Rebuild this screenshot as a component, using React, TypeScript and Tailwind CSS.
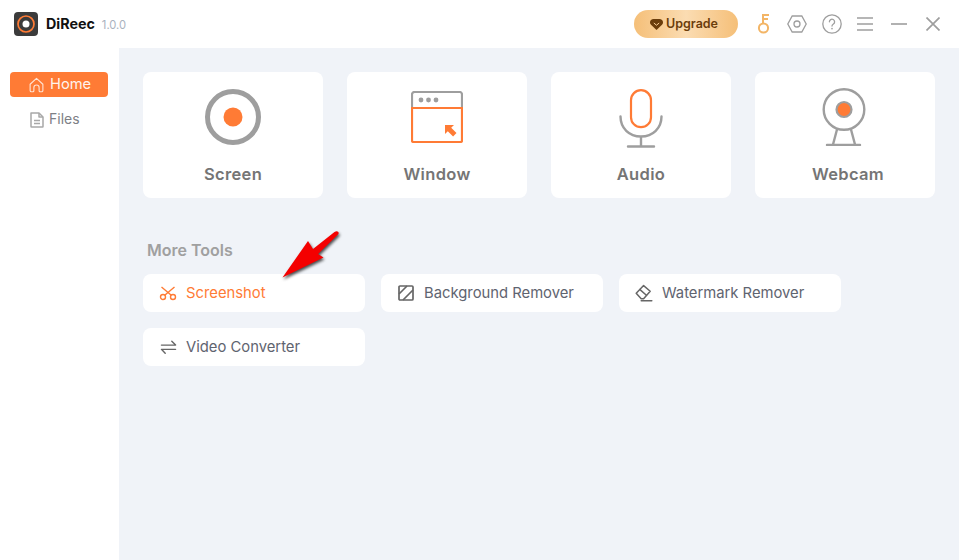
import type { ReactNode } from "react";

const FONT = "font-['Inter','Liberation_Sans',sans-serif]";
const ORANGE = "#ff7b35";
const GRAY = "#9e9e9e";

function Logo() {
  return (
    <svg width="24" height="24" viewBox="0 0 24 24">
      <rect width="24" height="24" rx="4" fill="#3b3b3b" />
      <circle cx="12" cy="12" r="8" fill="none" stroke={ORANGE} strokeWidth="1.7" />
      <circle cx="12" cy="12" r="3.5" fill="#fff" />
    </svg>
  );
}

function HomeIcon() {
  return (
    <svg width="15" height="16" viewBox="0 0 16 16" fill="none" stroke="#ffe3d3" strokeWidth="1.2" strokeLinejoin="round">
      <path d="M1.2 7.2 8 1l6.8 6.2v6.6a1.4 1.4 0 0 1-1.4 1.4h-1.6a1 1 0 0 1-1-1v-3.4a2.8 2.8 0 0 0-5.6 0v3.4a1 1 0 0 1-1 1H2.6a1.4 1.4 0 0 1-1.4-1.4Z" />
    </svg>
  );
}

function FileIcon() {
  return (
    <svg width="14" height="16" viewBox="0 0 14 16" fill="none" stroke="#a8a8a8" strokeWidth="1.5" strokeLinejoin="round">
      <path d="M1 1h8l4 4v9.5a.5.5 0 0 1-.5.5h-11a.5.5 0 0 1-.5-.5Z" />
      <path d="M9 1v4h4M4 8.500h6M4 11.500h6" />
    </svg>
  );
}

function ScreenIcon() {
  return (
    <svg width="58" height="58" viewBox="0 0 58 58">
      <circle cx="29" cy="29" r="25.5" fill="none" stroke={GRAY} strokeWidth="5" />
      <circle cx="29" cy="29" r="9.5" fill={ORANGE} />
    </svg>
  );
}

function WindowIcon() {
  return (
    <svg width="52" height="52" viewBox="0 0 52 52" fill="none">
      <path d="M1 17V3.500A2.500 2.500 0 0 1 3.500 1h45A2.500 2.500 0 0 1 51 3.500V17" stroke={GRAY} strokeWidth="2.2" />
      <circle cx="10" cy="9" r="2.4" fill={GRAY} />
      <circle cx="17.5" cy="9" r="2.4" fill={GRAY} />
      <circle cx="25" cy="9" r="2.4" fill={GRAY} />
      <path d="M1 17h50v32.500a1.500 1.500 0 0 1-1.500 1.500h-47A1.500 1.500 0 0 1 1 49.500Z" stroke={ORANGE} strokeWidth="2.2" />
      <path d="M34 34h9l-2.800 2.800 5.300 5.300-3.400 3.400-5.300-5.300L34 43Z" fill={ORANGE} />
    </svg>
  );
}

function AudioIcon() {
  return (
    <svg width="44" height="60" viewBox="0 0 44 60" fill="none" strokeLinecap="round">
      <rect x="12" y="1.200" width="20" height="37" rx="10" stroke={ORANGE} strokeWidth="2.2" />
      <path d="M1.500 27.500C1.500 39 10 47.500 22 47.500S42.500 39 42.500 27.500M22 47.500V57.500M9 57.500h26" stroke={GRAY} strokeWidth="2.4" />
    </svg>
  );
}

function WebcamIcon() {
  return (
    <svg width="44" height="58" viewBox="0 0 44 58" fill="none" strokeLinecap="round">
      <circle cx="22" cy="21.500" r="20.300" stroke={GRAY} strokeWidth="2.4" />
      <circle cx="22" cy="21.500" r="7.500" fill={ORANGE} stroke={GRAY} strokeWidth="2.2" />
      <path d="M15 41.500 11 56.500M29 41.500 33 56.500M5 57h33" stroke={GRAY} strokeWidth="2.4" />
    </svg>
  );
}

function ScissorsIcon() {
  return (
    <svg width="18" height="15" viewBox="0 0 18 15" fill="none" stroke={ORANGE} strokeWidth="1.400">
      <circle cx="4" cy="11" r="2.500" />
      <circle cx="14" cy="11" r="2.500" />
      <path d="M2.500 1 12.300 9.200M15.500 1 5.700 9.200" />
    </svg>
  );
}

function StripesIcon() {
  return (
    <svg width="16" height="16" viewBox="0 0 16 16" fill="none" stroke="#666" strokeWidth="1.700">
      <rect x="1" y="1" width="14" height="14" rx="1" />
      <path d="M1 9 9 1M5 15 15 5" />
    </svg>
  );
}

function EraserIcon() {
  return (
    <svg width="18" height="18" viewBox="0 0 18 18" fill="none" stroke="#666" strokeWidth="1.500" strokeLinejoin="round" strokeLinecap="round">
      <path d="M1.200 9.200 8.600 1.600l6.600 5.600-6.600 7.600H6.200Z" />
      <path d="m5 5.600 6.400 5.600M6.200 16.800h10.600" />
    </svg>
  );
}

function SwapIcon() {
  return (
    <svg width="17" height="14" viewBox="0 0 18 14" fill="none" stroke="#666" strokeWidth="1.500" strokeLinecap="round" strokeLinejoin="round">
      <path d="M1.500 5h15l-4-4M16.500 9.500h-15l4 4" />
    </svg>
  );
}

function KeyIcon() {
  return (
    <svg width="14" height="20" viewBox="0 0 14 20" fill="none" stroke="#f3b566" strokeWidth="2">
      <circle cx="6.500" cy="14" r="4.600" />
      <path d="M6 9V1h6M6 5h5" />
    </svg>
  );
}

function HexIcon() {
  return (
    <svg width="20" height="18" viewBox="0 0 20 18" fill="none" stroke={GRAY} strokeWidth="1.300">
      <path d="M5.200 1h9.600l4.400 8-4.400 8H5.200L.8 9Z" />
      <circle cx="10" cy="9" r="3" />
    </svg>
  );
}

function HelpIcon() {
  return (
    <svg width="20" height="20" viewBox="0 0 20 20" fill="none" stroke={GRAY} strokeWidth="1.300" strokeLinecap="round">
      <circle cx="10" cy="10" r="9.200" />
      <path d="M7.400 7.800a2.600 2.600 0 1 1 4 2.200c-.9.600-1.400 1-1.400 2" />
      <path d="M10 14.600v.1" strokeWidth="1.600" />
    </svg>
  );
}

function MenuIcon() {
  return (
    <svg width="16" height="14" viewBox="0 0 16 14" fill="none" stroke={GRAY} strokeWidth="1.600">
      <path d="M0 1h16M0 7h16M0 13h16" />
    </svg>
  );
}

function MinIcon() {
  return (
    <svg width="16" height="2" viewBox="0 0 16 2" fill="none" stroke={GRAY} strokeWidth="1.600">
      <path d="M0 1h16" />
    </svg>
  );
}

function CloseIcon() {
  return (
    <svg width="14" height="14" viewBox="0 0 14 14" fill="none" stroke={GRAY} strokeWidth="1.700">
      <path d="m.5.5 13 13M13.500.5l-13 13" />
    </svg>
  );
}

function Gem() {
  return (
    <svg width="13" height="11" viewBox="0 0 13 11">
      <path d="M3.500 0h6C11.500 0 13 1.500 13 3.500c0 1-.5 1.800-1 2.300L6.500 11 1 5.800C.5 5.300 0 4.500 0 3.500 0 1.500 1.500 0 3.500 0Z" fill="#6b3d0b" />
      <path d="M3.800 4 6.500 6.200 9.200 4" fill="none" stroke="#f9cf97" strokeWidth="1" />
    </svg>
  );
}

function Arrow() {
  return (
    <svg
      width="70"
      height="60"
      viewBox="0 0 70 60"
      className="absolute left-[277px] top-[228px] drop-shadow-[1px_2px_1.500px_rgba(0,0,0,0.7)]"
    >
      <path d="M5.500 49.500 31 13l5 8L57.500 4c2.500-2 5.500 0 3.500 2.500L41 26l5.500 3.500Z" fill="#f40000" />
    </svg>
  );
}

function ModeCard({ label, icon, iconBox, labelClass = "" }: { label: string; icon: ReactNode; iconBox: string; labelClass?: string }) {
  return (
    <div className="w-[180px] h-[126px] bg-white rounded-lg flex flex-col items-center">
      <div className={`flex justify-center items-start ${iconBox}`}>{icon}</div>
      <span className={`mt-auto mb-[14px] text-[16.500px] leading-5 font-semibold tracking-[0.02em] text-[#757575] ${labelClass}`}>{label}</span>
    </div>
  );
}

function ToolButton({ label, icon, active, iconClass }: { label: string; icon: ReactNode; active?: boolean; iconClass: string }) {
  return (
    <div className="w-[222px] h-[38px] bg-white rounded-lg flex items-center pl-[15px]">
      <span className={`w-[28px] flex items-center shrink-0 ${iconClass}`}>{icon}</span>
      <span className={`text-[14.800px] leading-5 pb-[1px] ${active ? "text-[#ff7b35]" : "text-[#5f6470]"}`}>{label}</span>
    </div>
  );
}

export default function App() {
  return (
    <div className={`relative w-[959px] h-[560px] overflow-hidden bg-white flex flex-col ${FONT}`}>
      {/* Title bar */}
      <header className="h-[48px] shrink-0 flex items-center pl-[14px]">
        <Logo />
        <span className="ml-2 text-[14.300px] font-bold text-[#111]">DiReec</span>
        <span className="ml-[7px] mt-[2px] text-[11.200px] text-[#a9b2be]">1.0.0</span>
        <div className="ml-auto flex items-center">
          <div className="w-[104px] h-[28px] rounded-full bg-[linear-gradient(90deg,#f5bf78,#fbdcb2,#f5bf78)] flex items-center justify-center gap-[3px] pr-[4px]">
            <Gem />
            <span className="text-[12.500px] font-semibold text-[#6b3d0b]">Upgrade</span>
          </div>
          <div className="ml-[19px] w-[14px] flex justify-center"><KeyIcon /></div>
          <div className="ml-[16px]"><HexIcon /></div>
          <div className="ml-[15px]"><HelpIcon /></div>
          <div className="ml-[15px]"><MenuIcon /></div>
          <div className="ml-[18px]"><MinIcon /></div>
          <div className="ml-[19px] mr-[19px]"><CloseIcon /></div>
        </div>
      </header>

      <div className="flex flex-1 min-h-0">
        {/* Sidebar */}
        <aside className="w-[119px] shrink-0 pt-[24px] pl-[10px]">
          <div className="w-[98px] h-[25px] rounded bg-[#ff7b35] flex items-center pl-[19px] gap-[6px]">
            <HomeIcon />
            <span className="text-[14.700px] leading-5 pb-[2px] text-[#fff3ec]">Home</span>
          </div>
          <div className="mt-[10px] h-[25px] flex items-center pl-[20px] gap-[5px]">
            <FileIcon />
            <span className="text-[14px] leading-5 pb-[2px] text-[#7d7f86]">Files</span>
          </div>
        </aside>

        {/* Main */}
        <main className="flex-1 bg-[#f0f3f8] pt-[24px] pl-[24px]">
          <div className="flex gap-[24px]">
            <ModeCard label="Screen" icon={<ScreenIcon />} iconBox="pt-[16px]" />
            <ModeCard label="Window" icon={<WindowIcon />} iconBox="pt-[19px]" />
            <ModeCard label="Audio" icon={<AudioIcon />} iconBox="pt-[17px]" />
            <ModeCard label="Webcam" icon={<WebcamIcon />} iconBox="pt-[16px] pr-[3px]" labelClass="ml-[6px]" />
          </div>

          <h2 className="mt-[42px] ml-[4px] text-[16px] leading-5 font-semibold text-[#a0a0a0]">More Tools</h2>

          <div className="mt-[14px] flex flex-wrap gap-x-[16px] gap-y-[16px] w-[700px]">
            <ToolButton label="Screenshot" icon={<ScissorsIcon />} iconClass="pl-[1px]" active />
            <ToolButton label="Background Remover" icon={<StripesIcon />} iconClass="pl-[2px]" />
            <ToolButton label="Watermark Remover" icon={<EraserIcon />} iconClass="pl-[1px]" />
            <ToolButton label="Video Converter" icon={<SwapIcon />} iconClass="pl-[2px]" />
          </div>
        </main>
      </div>

      <Arrow />
    </div>
  );
}
